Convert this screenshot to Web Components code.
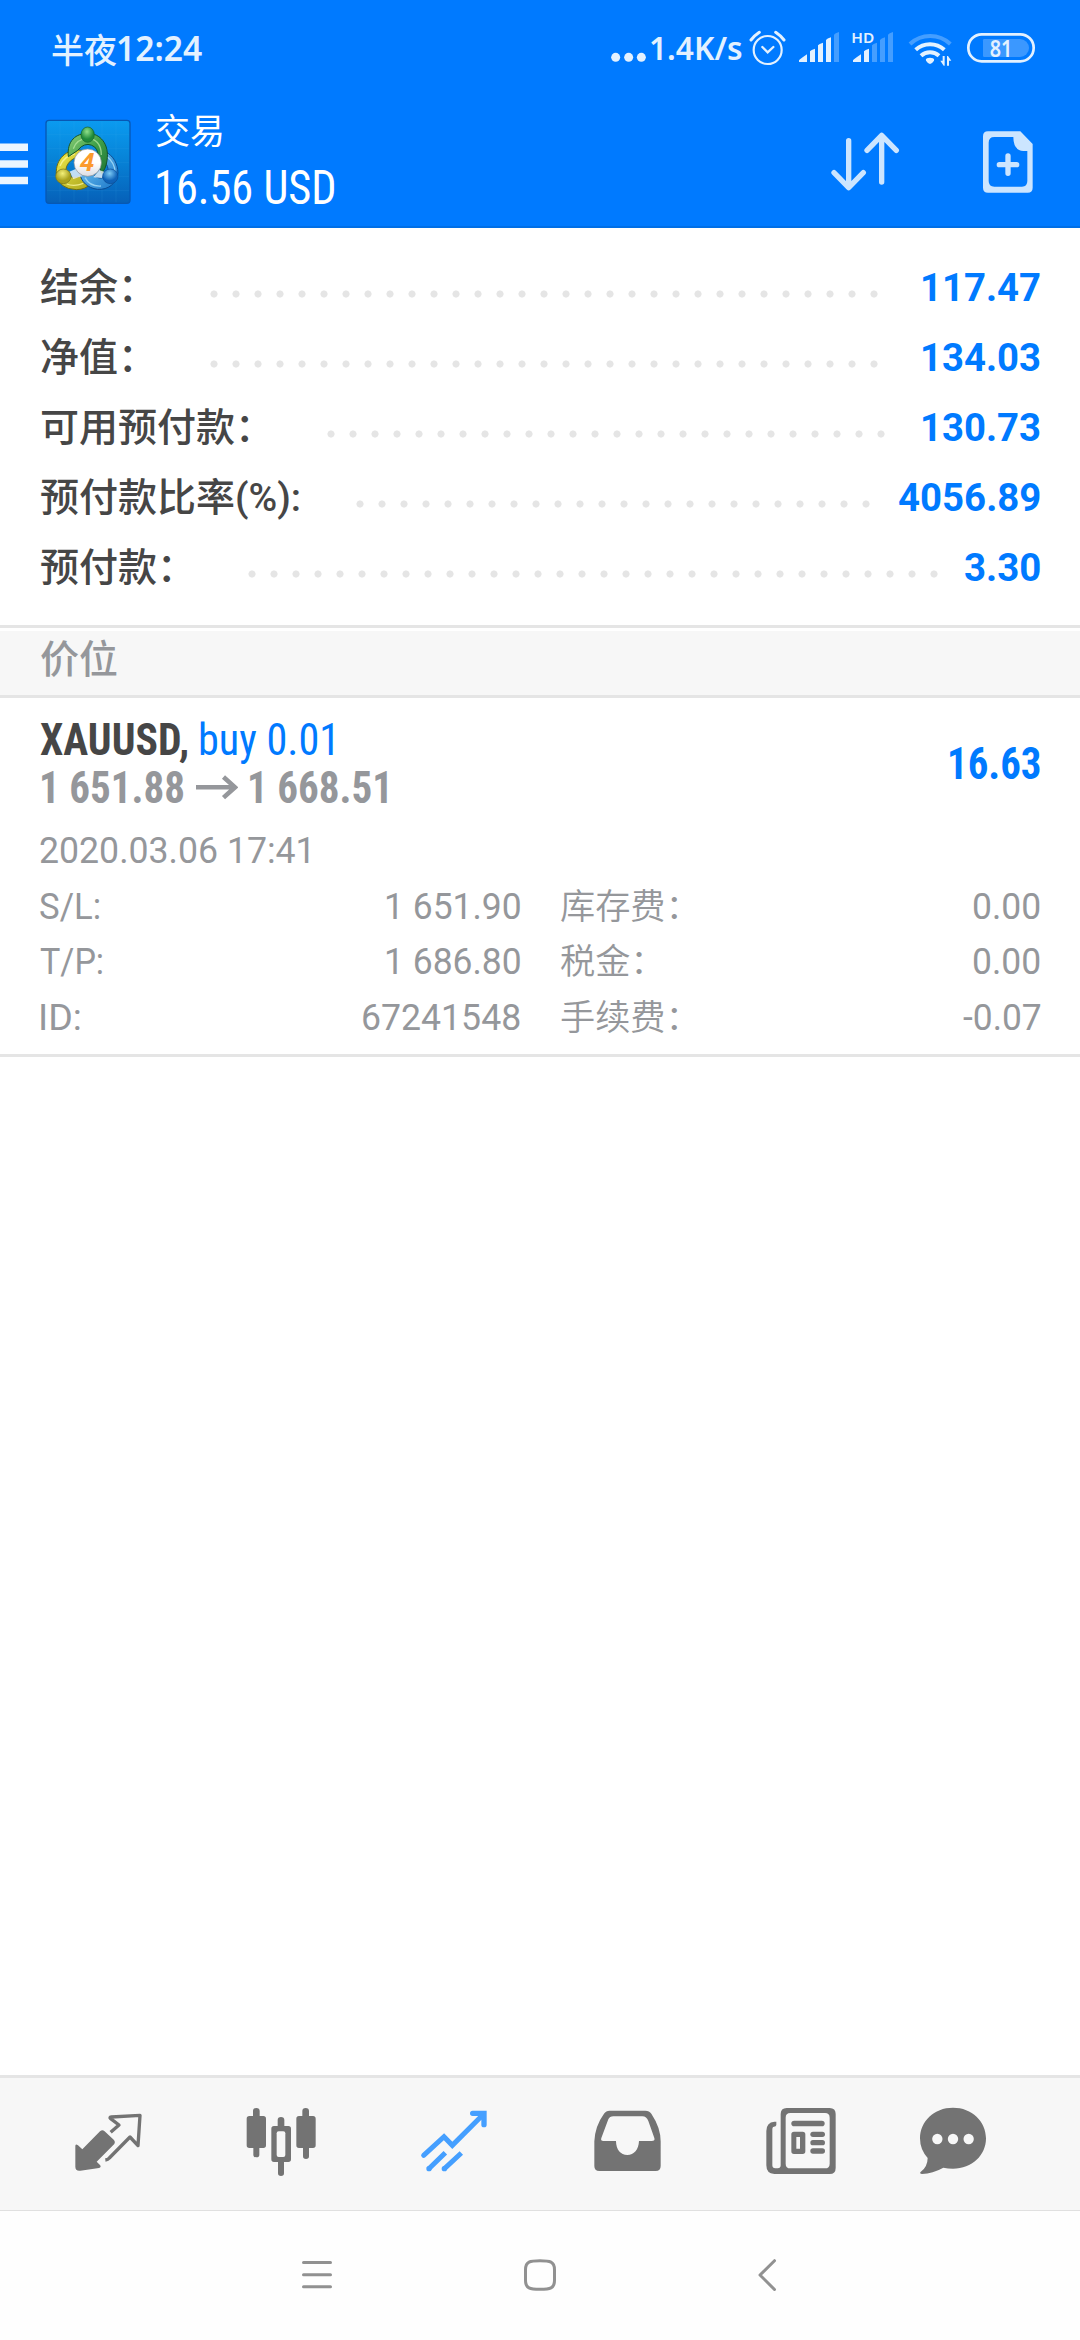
<!DOCTYPE html>
<html lang="zh-CN">
<head>
<meta charset="utf-8">
<title>交易</title>
<style>
html,body{margin:0;padding:0;background:#fff}
body{width:1080px;height:2340px;overflow:hidden;font-family:Roboto,"Noto Sans CJK SC",sans-serif}
</style>
</head>
<body>
<trade-app></trade-app>
<script>
const define = (name, html, init) => customElements.define(name, class extends HTMLElement {
  connectedCallback() {
    if (this.shadowRoot) return;
    this.attachShadow({ mode: 'open' }).innerHTML = typeof html === 'function' ? html(this) : html;
    if (init) init(this);
  }
});

/* Text whose drawn width is exactly the "w" attribute */
define('fit-text', `<style>
:host{display:inline-block;white-space:nowrap;flex:none;vertical-align:baseline}
span{display:inline-block;transform-origin:0 50%;white-space:pre}
</style><span><slot></slot></span>`, el => {
  const w = +el.getAttribute('w'), span = el.shadowRoot.querySelector('span');
  const cs = getComputedStyle(el), ctx = document.createElement('canvas').getContext('2d');
  ctx.font = `${cs.fontWeight} ${cs.fontSize} ${cs.fontFamily}`;
  if (cs.fontStretch === '75%') ctx.fontStretch = 'condensed';
  const m = ctx.measureText(el.textContent), k = span.getBoundingClientRect().width / m.width || 1;
  const left = m.actualBoundingBoxLeft * k, ink = (m.actualBoundingBoxLeft + m.actualBoundingBoxRight) * k;
  const s = w / ink;
  span.style.transform = `scaleX(${s})`;
  span.style.marginLeft = left * s + 'px';
  span.style.marginRight = '-400px';
  el.style.width = w + 'px';
});

define('status-bar', `<style>
:host{display:flex;height:96px;align-items:center;padding:0 0 0 51.7px;box-sizing:border-box;color:#e3f1ff;
 font-family:"Noto Sans","Noto Sans CJK SC",sans-serif;line-height:96px;--c:#e3f1ff}
.time{font-size:34.5px;font-weight:600;display:flex;gap:2px}
.time .cjk{font-family:"Noto Sans CJK SC",sans-serif;font-weight:500}
.dots{margin-left:auto}
.speed{font-size:32.5px;font-weight:600}
svg{display:block;flex:none;height:96px;fill:var(--c)}
.s{fill:none;stroke:var(--c)}
text{font-family:"Noto Sans",sans-serif;font-weight:600}
</style>
<div class="time"><fit-text class="cjk" w="64.5">半夜</fit-text><fit-text w="84.5">12:24</fit-text></div>
<svg class="dots" style="width:40.7px" viewBox="90 0 122 288"><circle cx="107" cy="172" r="13.5"/><circle cx="146" cy="172" r="13.5"/><circle cx="184" cy="172" r="13.5"/></svg>
<fit-text class="speed" w="90.7">1.4K/s</fit-text>
<svg style="width:51.7px" viewBox="484 0 155 288"><g class="s" stroke-width="6.5"><circle cx="564" cy="150" r="42"/><path d="M548 141l16 16 17-16" stroke-width="7" stroke-linecap="round"/><path d="M514 120q10-13 25-23M588 97q15 10 25 23" stroke-width="9" stroke-linecap="round"/></g></svg>
<svg style="width:50px" viewBox="639 0 150 288"><path d="M657 186v-5q2-3 24-18v23zM690 186v-32q3-5 15-8v40zM714 186v-50q3-5 15-8v58zM738 186v-66q3-5 15-8v74z"/><path opacity=".3" d="M762 186v-82q3-5 15-8v90z"/></svg>
<svg style="width:60px" viewBox="789 0 180 288"><path d="M819 186v-5q2-3 24-18v23zM852 186v-32q3-5 15-8v40z"/><path opacity=".3" d="M876 186v-50q3-5 15-8v58zM900 186v-66q3-5 15-8v74zM924 186v-82q3-5 15-8v90z"/><text x="814" y="129" font-size="45" textLength="69" lengthAdjust="spacingAndGlyphs">HD</text></svg>
<svg style="width:58px" viewBox="969 0 174 288"><g class="s" stroke-width="12"><path opacity=".3" d="M990 132a88 88 0 0 1 121 0"/><path d="M1007 149a64 64 0 0 1 86 0"/><path d="M1023 167a40 40 0 0 1 54 0"/></g><path d="M1038 182q-2-4 3-7 9-4 18 0 5 3 3 7-5 8-12 10-7-2-12-10zM1088 168h6v29h-3l-10-15h7zM1101 197v-29h3l10 14h-7v15z"/></svg>
<svg style="width:119px" viewBox="1143 0 357 288"><rect class="s" x="1165" y="103" width="196" height="81" rx="40" stroke-width="8"/><path opacity=".26" d="M1213 117h107a27 27 0 0 1 0 54h-107q-4 0-4-4v-46q0-4 4-4z"/><text x="1229" y="170" font-size="68" font-weight="700" textLength="68" lengthAdjust="spacingAndGlyphs">81</text></svg>`);

define('mt-logo', `<style>:host{display:block;flex:none;width:86px;height:86px}svg{display:block}</style>
<svg width="86" height="86" viewBox="27 29 258 258">
<defs>
<linearGradient id="b" x1="0" y1="0" x2="0" y2="1"><stop offset="0" stop-color="#0b9bf0"/><stop offset=".45" stop-color="#0784d8"/><stop offset="1" stop-color="#0660b8"/></linearGradient>
<linearGradient id="g" x1="0" y1="0" x2="1" y2="1"><stop offset="0" stop-color="#8fd07a"/><stop offset=".5" stop-color="#3fa048"/><stop offset="1" stop-color="#1f7434"/></linearGradient>
<linearGradient id="y" x1="0" y1="0" x2="1" y2="1"><stop offset="0" stop-color="#f2ea4a"/><stop offset="1" stop-color="#a9a51c"/></linearGradient>
<linearGradient id="u" x1="0" y1="0" x2="1" y2="1"><stop offset="0" stop-color="#7fd0f7"/><stop offset="1" stop-color="#1673c8"/></linearGradient>
<radialGradient id="gb" cx=".45" cy=".3"><stop offset="0" stop-color="#8fe08a"/><stop offset="1" stop-color="#1f8a3a"/></radialGradient>
<radialGradient id="yb" cx=".45" cy=".3"><stop offset="0" stop-color="#f3f07a"/><stop offset="1" stop-color="#a8a01c"/></radialGradient>
<radialGradient id="ub" cx=".45" cy=".3"><stop offset="0" stop-color="#7ccaf5"/><stop offset="1" stop-color="#0f62b8"/></radialGradient>
<linearGradient id="w" x1="0" y1="0" x2="0" y2="1"><stop offset=".5" stop-color="#fff"/><stop offset="1" stop-color="#dcdde2"/></linearGradient>
</defs>
<rect x="30" y="33" width="252" height="249" rx="9" fill="url(#b)" stroke="#0758b4" stroke-width="4"/>
<path d="M72 36v243M114 36v243M156 36v243M198 36v243M240 36v243M33 76h246M33 118h246M33 160h246M33 202h246M33 244h246" stroke="#4bb4f0" stroke-width="1.5" opacity=".22"/>
<path d="M137 123C92 116 58 150 61 194q8 46 61 47 27-1 42-17l-17-32q-19 16-41 11-23-10-14-32 9-20 30-27z" fill="url(#y)" stroke="#6d6c13" stroke-width="3"/>
<path d="M72 170q13-31 44-36M92 224q22 9 50-2" fill="none" stroke="#fbf7a0" stroke-width="4" opacity=".8"/>
<path d="M207 126c26 14 38 37 39 65-5 32-29 51-61 49-31-4-49-22-54-49l38-2c8 16 24 21 36 14 15-9 14-29 3-43z" fill="url(#u)" stroke="#0a4a92" stroke-width="3"/>
<path d="M212 141q25 20 25 48M147 205q14 27 48 25" fill="none" stroke="#b5e5fb" stroke-width="4" opacity=".75"/>
<path d="M97 142C92 94 120 72 156 72s65 32 57 82q-4 26-16 38l-12-32q6-33-9-47-20-15-40-1-6 6-12 12z" fill="url(#g)" stroke="#14542a" stroke-width="3"/>
<path d="M112 118c8-23 24-30 42-31 24 0 42 17 42 50" fill="none" stroke="#b5e8a2" stroke-width="4" opacity=".75"/>
<path d="M100 187l24-10 14 24-26 8zM190 182l16 6-8 18-26-2z" fill="#fff" opacity=".75"/>
<ellipse cx="155" cy="76" rx="20" ry="23" fill="url(#gb)" stroke="#14602c" stroke-width="2"/>
<ellipse cx="82" cy="201" rx="23" ry="22" fill="url(#yb)" stroke="#76731a" stroke-width="2"/>
<ellipse cx="223" cy="201" rx="23" ry="22" fill="url(#ub)" stroke="#0a4a92" stroke-width="2"/>
<circle cx="155" cy="160" r="41" fill="url(#w)" stroke="#8a8f96" stroke-width="2"/>
<text x="133" y="185" font-family="Open Sans,sans-serif" font-size="76" font-weight="700" font-style="italic" fill="#fb9a2c" textLength="42" lengthAdjust="spacingAndGlyphs">4</text>
</svg>`);

define('top-bar', `<style>
:host{display:flex;height:132px;box-sizing:border-box;border-bottom:2px solid #006fe6;color:#fff}
svg{display:block;flex:none}
mt-logo{margin:22.5px 0 0 17px}
.title{display:flex;flex-direction:column;padding:11px 0 0 25px}
.name{font-size:35px;line-height:52px}
.sum{font-size:48px;line-height:57px;padding-left:.9px;font-stretch:75%}
.acts{margin-left:auto;width:280px}
.i{fill:none;stroke:#cce5ff;stroke-linecap:round;stroke-linejoin:round}
</style>
<svg width="28" height="130" viewBox="0 96 28 130" fill="#ebf5ff"><path d="M0 143.5h28v7.5H0zM0 160.2h28v7.5H0zM0 176.7h28v7.5H0z"/></svg>
<mt-logo></mt-logo>
<div class="title"><div class="name"><fit-text w="66">交易</fit-text></div><div class="sum"><fit-text w="177.6">16.56 USD</fit-text></div></div>
<svg class="acts" height="130" viewBox="660 288 840 390"><g class="i" stroke-width="16"><path d="M806 422v140M762 518l44 45 44-45M905 546V406M861 451l44-45 44 45"/><path d="M1258 494h52M1284 468v52"/></g>
<path fill="#cce5ff" fill-rule="evenodd" d="M1224 394h97l37 38v131q0 15-15 15h-119q-15 0-15-15V409q0-15 15-15zM1243 411q-17 0-17 17v115q0 17 17 17h83q16 0 16-17v-90h-12q-30-2-30-42z"/></svg>`);

define('summary-row', el => `<style>
:host{display:flex;height:70px;line-height:70px;font-size:39px;color:#464646}
.label{flex:none;width:${el.getAttribute('lead')}px;font-weight:500;white-space:nowrap}
.dots{flex:none;width:${el.getAttribute('dots') * 22}px;height:8px;margin-top:37.4px;background:radial-gradient(circle,#e5e5e5 3.2px,rgba(229,229,229,0) 3.9px) 0 0/22px 8px repeat-x}
.value{margin-left:auto;color:#007aff;font-weight:700}
</style><div class="label"><slot></slot></div><div class="dots"></div><div class="value"><fit-text w="${el.getAttribute('vw')}">${el.getAttribute('value')}</fit-text></div>`);

define('account-summary', `<style>
:host{display:block;height:397px;box-sizing:border-box;padding:24.7px 40px 0}
</style>
<summary-row lead="162.5" dots="31" value="117.47" vw="116.7">结余：</summary-row>
<summary-row lead="162.5" dots="31" value="134.03" vw="116.7">净值：</summary-row>
<summary-row lead="279.6" dots="26" value="130.73" vw="116.7">可用预付款：</summary-row>
<summary-row lead="308.5" dots="24" value="4056.89" vw="141">预付款比率(%):</summary-row>
<summary-row lead="201.4" dots="32" value="3.30" vw="75">预付款：</summary-row>`);

define('section-title', `<style>
:host{display:block;border-top:3px solid #e5e5e5;border-bottom:3px solid #e5e5e5;padding-top:3px}
div{height:64px;background:#f7f7f7;box-sizing:border-box;padding-left:40px;font-size:39px;line-height:59px;font-weight:500;color:#95979b}
</style><div><slot></slot></div>`);

define('detail-row', el => `<style>
:host{display:flex;height:55.5px;line-height:55.5px;font-size:36px;justify-content:space-between;white-space:nowrap}
.cjk{font-size:35.2px;font-weight:350}
.label{margin-left:${el.getAttribute('label') === 'ID:' ? 1 : 0}px}
</style>${el.hasAttribute('cjk') ? `<span class="cjk">${el.getAttribute('label')}</span>` : `<fit-text class="label" w="${el.getAttribute('lw')}">${el.getAttribute('label')}</fit-text>`}<fit-text w="${el.getAttribute('vw')}">${el.getAttribute('value')}</fit-text>`);

define('position-card', `<style>
:host{display:block;height:359px;box-sizing:border-box;border-bottom:3px solid #e5e5e5;padding:19px 40px 0;color:#95979b}
.head{display:flex;justify-content:space-between;align-items:center;font-size:44px;line-height:47.7px;font-stretch:75%}
.l{display:flex}
.sym{color:#464646;font-weight:700}.side{color:#007aff;margin-left:12px}
.prices{font-weight:700;padding-left:1.5px}
svg{display:block;margin:0 12px}
.profit{color:#007aff;font-weight:700}
.date{margin-top:12px;height:55.3px;line-height:55.3px;font-size:36px}
.cols{display:grid;grid-template-columns:480px 480px;column-gap:40px;width:1000px}
</style>
<div class="head"><div>
<div class="l"><fit-text class="sym" w="147.5">XAUUSD,</fit-text><fit-text class="side" w="132.7">buy 0.01</fit-text></div>
<div class="l prices"><fit-text w="142">1 651.88</fit-text><svg width="42" height="47.7" viewBox="0 0 42 47.7" fill="none" stroke="#95979b" stroke-width="4.6"><path d="M0 22.3h39M27.5 12l11.5 10.3L27.5 32.6"/></svg><fit-text w="137.5">1 668.51</fit-text></div>
</div><fit-text class="profit" w="90.5">16.63</fit-text></div>
<div class="date"><fit-text w="268.5">2020.03.06 17:41</fit-text></div>
<div class="cols">
<detail-row label="S/L:" lw="59.5" value="1 651.90" vw="133.5"></detail-row><detail-row cjk label="库存费：" value="0.00" vw="66"></detail-row>
<detail-row label="T/P:" lw="62.5" value="1 686.80" vw="133.5"></detail-row><detail-row cjk label="税金：" value="0.00" vw="66"></detail-row>
<detail-row label="ID:" lw="39" value="67241548" vw="157"></detail-row><detail-row cjk label="手续费：" value="-0.07" vw="77.5"></detail-row>
</div>`);

define('tab-bar', `<style>
:host{display:flex;height:136px;box-sizing:border-box;border-top:3px solid #e5e5e5;border-bottom:1px solid #e0e0e0;background:#f7f7f7;padding-left:22px}
svg{display:block;flex:none;width:173px;height:132px;fill:#737373}
.s{fill:none;stroke:#737373}
.h{fill:#f7f7f7}
</style>
<svg viewBox="-24 54 519 396"><path d="M136 258q0-8 8-2l13 12 53-54q7-6 13-1l29 27q5 6 1 12l-53 53 10 10q5 6-3 9l-56 8q-15 2-15-12z"/><path class="s" stroke-width="10" stroke-linejoin="round" d="M242 217l25-22-25-19q-5-4 2-5l86-5-6 91-24-26-62 63q-4 5-12 6"/></svg>
<svg viewBox="495 54 519 396"><path d="M669 153q0-9 10-9t10 9v15h11q8 0 8 8v80q0 8-8 8h-12v20q0 8-9 8t-9-8v-20h-12q-8 0-8-8v-80q0-8 8-8h11zM817 153q0-9 10-9t10 9v15h12q8 0 8 8v80q0 8-8 8h-12v25q0 8-9 8t-9-8v-25h-12q-8 0-8-8v-80q0-8 8-8h10zM743 180q0-9 10-9t10 9v18h12q8 0 8 8v92q0 8-8 8h-13v34q0 8-9 8t-9-8v-34h-12q-8 0-8-8v-92q0-8 8-8h11z"/><rect class="h" x="740" y="214" width="26" height="77" rx="6"/></svg>
<svg viewBox="1014 54 519 396"><g fill="none" stroke="#459fff" stroke-width="15"><path stroke-linecap="round" d="M1181 286l61-56 25 26 88-88"/><path stroke-linecap="round" d="M1328 160h34v34" stroke-width="16"/><path d="M1195 328l51-50M1241 328l53-49"/></g><g fill="#459fff"><path d="M1343 166h20v22z"/><circle cx="1197" cy="326" r="8"/><circle cx="1243" cy="326" r="8"/></g></svg>
<svg viewBox="-57 54 519 396"><path fill-rule="evenodd" d="M149 152h107q12 0 18 9 28 42 28 83v74q0 15-15 15H118q-15 0-15-15v-74q2-46 29-83 6-9 17-9zM160 169q-11 0-15 9l-21 56q-3 9 6 9h38c0 26 14 42 34 42s34-16 35-42h38q11 0 8-9l-18-51q-5-14-18-14z"/></svg>
<svg viewBox="462 54 519 396"><path fill-rule="evenodd" d="M680 144h129q18 0 18 18v162q0 18-18 18H643q-24-1-24-26v-103q0-26 24-28h6v10q-1 5-7 5-5 0-5 9v107q0 9 9 9h7q9 0 9-9V162q0-18 18-18zM691 159q-14 0-14 14v138q0 14 14 14h104q14 0 14-14V173q0-14-14-14z"/><rect x="694" y="182" width="100" height="17" rx="8.500"/><rect x="751" y="215" width="44" height="16" rx="8"/><rect x="751" y="240" width="44" height="16" rx="8"/><rect x="751" y="265" width="44" height="16" rx="8"/><path fill-rule="evenodd" d="M702 215h26q8 0 8 8v51q0 8-8 8h-26q-8 0-8-8v-51q0-8 8-8zM709 231v35h11v-35z"/></svg>
<svg style="width:131px" viewBox="981 54 393 396"><path d="M1179 143c57 0 99 41 99 92s-42 91-99 91q-15 0-29-3-32 18-64 19-7 0-5-5 22-16 22-43-23-25-23-59c0-51 42-92 99-92z"/><g class="h"><circle cx="1132" cy="237" r="15.500"/><circle cx="1179" cy="237" r="15.500"/><circle cx="1226" cy="237" r="15.500"/></g></svg>`);

define('system-nav', `<style>
:host{display:flex;height:129px;background:#fefefe;justify-content:center}
svg{display:block;width:500px;height:129px;fill:none;stroke:#919191;stroke-width:3;stroke-linecap:round}
</style><svg viewBox="290 2211 500 129"><path d="M303.500 2262.500h27M303.500 2274.700h27M303.500 2286.700h27"/><path d="M540 2260.700c10 0 14.500 .7 14.500 9v10.600c0 8.300-4.500 9-14.500 9s-14.500-.7-14.500-9v-10.600c0-8.300 4.500-9 14.500-9z"/><path stroke-linejoin="round" d="M774.500 2260.700L760 2275l14.500 14.500"/></svg>`);

define('trade-app', `<style>
:host{display:flex;flex-direction:column;width:1080px;height:2340px;background:#fff}
header{background:#007aff}
main{flex:1}
</style>
<header><status-bar></status-bar><top-bar></top-bar></header>
<main><account-summary></account-summary><section-title>价位</section-title><position-card></position-card></main>
<tab-bar></tab-bar><system-nav></system-nav>`);
</script>
</body>
</html>
